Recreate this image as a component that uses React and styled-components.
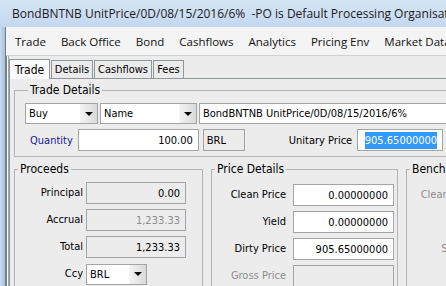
import React from "react";
import styled, { createGlobalStyle } from "styled-components";

const ui = `"DejaVu Sans Condensed", "DejaVu Sans", "Liberation Sans", sans-serif`;
const chrome = `"Open Sans", "Noto Sans", sans-serif`;

const GlobalStyle = createGlobalStyle`
  html, body {
    margin: 0;
    padding: 0;
    background: #ececec;
    overflow: hidden;
  }
`;

const Window = styled.div`
  width: 446px;
  height: 286px;
  overflow: hidden;
  display: flex;
  flex-direction: column;
  background: #bcd3ea;
`;

const TitleBar = styled.div`
  height: 27px;
  flex: none;
  display: flex;
  align-items: center;
  gap: 7px;
  padding-left: 5px;
  background: linear-gradient(#d5e4f5, #c4d8ee);
  font-family: ${chrome};
  font-size: 12px;
  color: #1b1b1b;
  white-space: nowrap;
`;

const Frame = styled.div`
  flex: 1;
  display: flex;
  min-height: 0;
`;

const FrameEdge = styled.div`
  width: 5px;
  flex: none;
  background: linear-gradient(90deg, #c6daef, #a8c0db);
`;

const Client = styled.div`
  flex: 1;
  display: flex;
  flex-direction: column;
  min-width: 0;
  border-left: 1px solid #6e7f93;
  background: #ececec;
`;

const MenuBar = styled.div`
  height: 28px;
  flex: none;
  display: flex;
  align-items: center;
  padding-left: 1.5px;
  background: #f4f4f4;
  border-bottom: 1px solid #cfcfcf;
  font-family: ${chrome};
  font-size: 11.5px;
  color: #111;
  white-space: nowrap;
`;

const MenuItem = styled.span`
  padding: 0 7.5px;
`;

const MdiArea = styled.div`
  flex: 1;
  display: flex;
  flex-direction: column;
  padding-left: 3px;
  background: linear-gradient(90deg, #7b7b7b 0 1px, #ffffff 1px 2px, #a5a5a5 2px 3px, #ececec 3px);
`;

const TabStrip = styled.div`
  display: flex;
  align-items: flex-end;
  height: 21px;
  margin-top: 1px;
  font-family: ${ui};
  font-size: 11px;
`;

const Tab = styled.div`
  height: ${p => (p.$active ? 20 : 18)}px;
  width: ${p => p.$w}px;
  box-sizing: border-box;
  display: flex;
  align-items: center;
  justify-content: center;
  border: 1px solid #8e979a;
  border-bottom: none;
  margin-right: 1px;
  background: ${p => (p.$active ? "#fbfbfb" : "#ebebeb")};
  color: #000;
  font-size: ${p => (p.$active ? 12 : 11)}px;
  position: relative;
  z-index: ${p => (p.$active ? 1 : 0)};
  margin-bottom: ${p => (p.$active ? -1 : 0)}px;
`;

const Panel = styled.div`
  flex: 1;
  width: 700px;
  border: 1px solid #8e979a;
  padding: 4px 0 0 4px;
  display: flex;
  flex-direction: column;
  gap: 5px;
  font-family: ${ui};
  font-size: 11px;
  color: #000;
`;

const Group = styled.fieldset`
  margin: 0;
  padding: ${p => p.$pad || "6px 0 5px 10px"};
  border: 1px solid #b3b3b3;
  width: ${p => p.$w}px;
  flex: none;
  box-sizing: border-box;
  min-width: 0;
`;

const GroupTitle = styled.legend`
  font-size: 12px;
  padding: 0 2px;
  margin-left: 3px;
  line-height: 14px;
`;

const Row = styled.div`
  display: flex;
  align-items: center;
  gap: ${p => p.$gap || 0}px;
  margin-top: ${p => p.$top || 0}px;
`;

const Combo = styled.div`
  width: ${p => p.$w}px;
  height: ${p => p.$h || 21}px;
  box-sizing: border-box;
  border: 1px solid #a4a4a4;
  background: #fff;
  display: flex;
  align-items: center;
  padding-left: 3px;
  flex: none;
`;

const ComboText = styled.span`
  flex: 1;
`;

const ComboButton = styled.span`
  width: 17px;
  align-self: stretch;
  display: flex;
  align-items: center;
  justify-content: center;
  background: linear-gradient(90deg, #f4f4f4, #d9d9d9);
  &::after {
    content: "";
    border-left: 4px solid transparent;
    border-right: 4px solid transparent;
    border-top: 4px solid #000;
  }
`;

const Field = styled.div`
  width: ${p => p.$w}px;
  height: ${p => p.$h || 22}px;
  box-sizing: border-box;
  border: 1px solid #a4a4a4;
  background: ${p => (p.$ro ? "#ececec" : "#fff")};
  color: ${p => (p.$dim ? "#8d8d8d" : "#000")};
  display: flex;
  align-items: center;
  justify-content: ${p => (p.$left ? "flex-start" : "flex-end")};
  padding: 0 5px 0 3px;
  margin-left: ${p => p.$ml || 0}px;
  flex: none;
  white-space: nowrap;
  overflow: hidden;
`;

const Selected = styled.span`
  background: #3399ff;
  color: #fff;
  padding: 2px 0;
`;

const Caption = styled.span`
  color: ${p => p.$color || "#000"};
  margin: ${p => p.$m || "0"};
  white-space: nowrap;
`;

const Bottom = styled.div`
  display: flex;
  gap: 8px;
`;

const Form = styled.div`
  display: grid;
  grid-template-columns: ${p => p.$label}px auto;
  column-gap: ${p => p.$gap}px;
  row-gap: 5px;
  align-items: center;
  padding-top: ${p => p.$top}px;
`;

const FormLabel = styled.span`
  text-align: right;
  white-space: nowrap;
  color: ${p => (p.$dim ? "#8d8d8d" : "#000")};
  height: 22px;
  line-height: 22px;
`;

const AppIcon = () => (
  <svg width="15" height="15" viewBox="0 0 15 15">
    <defs>
      <linearGradient id="ic" x1="0" y1="0" x2="1" y2="1">
        <stop offset="0" stopColor="#f6d9a8" />
        <stop offset="1" stopColor="#d98a3a" />
      </linearGradient>
    </defs>
    <rect x="2" y="2" width="11" height="11" rx="3" fill="url(#ic)" transform="rotate(-20 7.5 7.5)" />
    <path d="M3 11 L11 4" stroke="#ffffff" strokeWidth="2" strokeLinecap="round" />
    <path d="M5 12 L12 7" stroke="#b9d4ee" strokeWidth="1" strokeLinecap="round" />
  </svg>
);

const Combobox = ({ w, children }) => (
  <Combo $w={w}>
    <ComboText>{children}</ComboText>
    <ComboButton />
  </Combo>
);

export default function App() {
  return (
    <>
      <GlobalStyle />
      <Window>
        <TitleBar>
          <AppIcon />
          <span>BondBNTNB UnitPrice/0D/08/15/2016/6%&nbsp; -PO is Default Processing Organisation</span>
        </TitleBar>
        <Frame>
          <FrameEdge />
          <Client>
            <MenuBar>
              {["Trade", "Back Office", "Bond", "Cashflows", "Analytics", "Pricing Env", "Market Data", "Help"].map(m => (
                <MenuItem key={m}>{m}</MenuItem>
              ))}
            </MenuBar>
            <MdiArea>
              <TabStrip>
                <Tab $active $w={41}>Trade</Tab>
                <Tab $w={42}>Details</Tab>
                <Tab $w={58}>Cashflows</Tab>
                <Tab $w={31}>Fees</Tab>
              </TabStrip>
              <Panel>
                <Group $w={700}>
                  <GroupTitle>Trade Details</GroupTitle>
                  <Row $gap={2}>
                    <Combobox w={73}>Buy</Combobox>
                    <Combobox w={97}>Name</Combobox>
                    <Field $w={300} $h={21} $left>BondBNTNB UnitPrice/0D/08/15/2016/6%</Field>
                  </Row>
                  <Row $top={5}>
                    <Caption $color="#17179b" $m="0 5px 0 5px">Quantity</Caption>
                    <Field $w={121}>100.00</Field>
                    <Field $w={42} $ro $left $ml={4}>BRL</Field>
                    <Caption $m="0 5px 0 44px">Unitary Price</Caption>
                    <Field $w={86}><Selected>905.65000000</Selected></Field>
                  </Row>
                </Group>
                <Bottom>
                  <Group $w={189} $pad="0">
                    <GroupTitle>Proceeds</GroupTitle>
                    <Form $label={68} $gap={3} $top={6}>
                      <FormLabel>Principal</FormLabel>
                      <Field $w={100} $ro>0.00</Field>
                      <FormLabel>Accrual</FormLabel>
                      <Field $w={100} $ro $dim>1,233.33</Field>
                      <FormLabel>Total</FormLabel>
                      <Field $w={100} $ro>1,233.33</Field>
                      <FormLabel>Ccy</FormLabel>
                      <Combobox w={61}>BRL</Combobox>
                    </Form>
                  </Group>
                  <Group $w={187} $pad="0">
                    <GroupTitle>Price Details</GroupTitle>
                    <Form $label={74} $gap={7} $top={8}>
                      <FormLabel>Clean Price</FormLabel>
                      <Field $w={101}>0.00000000</Field>
                      <FormLabel>Yield</FormLabel>
                      <Field $w={101}>0.00000000</Field>
                      <FormLabel>Dirty Price</FormLabel>
                      <Field $w={101}>905.65000000</Field>
                      <FormLabel $dim>Gross Price</FormLabel>
                      <Field $w={101} $ro />
                    </Form>
                  </Group>
                  <Group $w={200} $pad="0">
                    <GroupTitle>Benchmark</GroupTitle>
                    <Form $label={69} $gap={7} $top={8}>
                      <FormLabel $dim>Clean Price</FormLabel>
                      <Field $w={101} $ro />
                      <FormLabel $dim>&nbsp;</FormLabel>
                      <Field $w={101} $ro />
                      <FormLabel $dim>Spread</FormLabel>
                      <Field $w={101} $ro />
                    </Form>
                  </Group>
                </Bottom>
              </Panel>
            </MdiArea>
          </Client>
        </Frame>
      </Window>
    </>
  );
}
